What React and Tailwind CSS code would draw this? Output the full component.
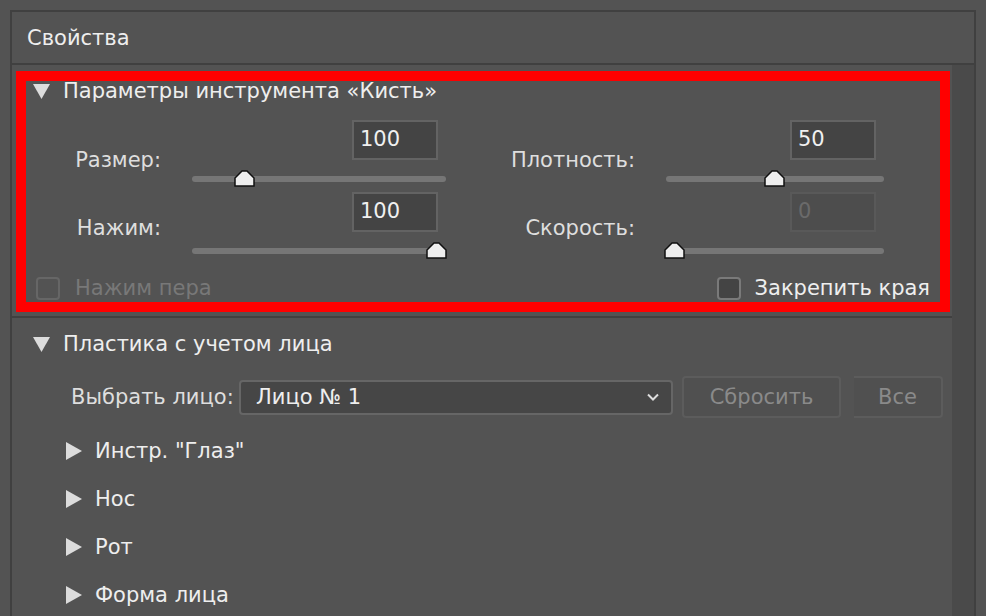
import React from 'react'

const FONT = "font-['DejaVu_Sans',sans-serif]"

function TriDown() {
  return (
    <svg width="17" height="15" viewBox="0 0 17 15" className="shrink-0">
      <polygon points="0,0 17,0 8.5,15" fill="#dcdcdc" />
    </svg>
  )
}

function TriRight() {
  return (
    <svg width="16" height="18" viewBox="0 0 16 18" className="shrink-0">
      <polygon points="0,0 16,9 0,18" fill="#dcdcdc" />
    </svg>
  )
}

function Thumb({ left }) {
  return (
    <svg
      width="21"
      height="17"
      viewBox="0 0 21 17"
      className="absolute top-[-6px]"
      style={{ left }}
    >
      <polygon
        points="1,16 1,8 8,1 13,1 20,8 20,16"
        fill="#eeeeee"
        stroke="#111111"
        strokeWidth="1.5"
        strokeLinejoin="miter"
      />
    </svg>
  )
}

function SliderControl({ value, thumb, disabled, labelOffset, label }) {
  return (
    <>
      <div
        className={`text-right text-[21px] leading-6 text-[#dedede] ${labelOffset}`}
      >
        {label}
      </div>
      <div className="flex flex-col">
        <div
          className={`ml-auto mr-[8px] flex h-[40px] w-[86px] items-center border-2 pl-[6px] text-[21px] ${
            disabled
              ? 'border-[#595959] bg-[#4d4d4d] text-[#6a6a6a]'
              : 'border-[#636363] bg-[#444444] text-[#f0f0f0]'
          }`}
        >
          {value}
        </div>
        <div className="relative mt-[16px] mb-[5px] h-[6px] rounded-full bg-[#767676]">
          <Thumb left={thumb} />
        </div>
      </div>
    </>
  )
}

function Checkbox({ disabled }) {
  return (
    <div
      className={`h-[23px] w-[24px] shrink-0 rounded-[4px] border-2 ${
        disabled ? 'border-[#666666]' : 'border-[#7a7a7a] bg-[#444444]'
      }`}
    />
  )
}

function Chevron() {
  return (
    <svg width="12" height="8" viewBox="0 0 12 8" fill="none">
      <path d="M1 1.5 L6 6.5 L11 1.5" stroke="#dedede" strokeWidth="2" />
    </svg>
  )
}

const SUBITEMS = ['Инстр. "Глаз"', 'Нос', 'Рот', 'Форма лица']

export default function App() {
  return (
    <div className={`h-[616px] w-[986px] overflow-hidden bg-[#535353] pl-[10px] pt-[10px] ${FONT}`}>
      <div className="h-[620px] w-[966px] border-x-2 border-t-2 border-[#404040]">
        <div className="flex h-[53px] items-center border-b-2 border-[#404040] pl-[15px] text-[21px] leading-6 text-[#eeeeee]">
          Свойства
        </div>

        <div className="flex">
          <div className="w-[940px]">
            {/* brush tool options */}
            <section className="relative border-b-2 border-[#404040] pt-[14px] pb-[16px]">
              <div className="flex items-center gap-[13px] pl-[21px] text-[21px] leading-6 text-[#eeeeee]">
                <TriDown />
                <span>Параметры инструмента «Кисть»</span>
              </div>

              <div className="mt-[17px] ml-[14px] grid grid-cols-[135px_254px_158px_218px] gap-x-[31px] gap-y-[5px]">
                <SliderControl label="Размер:" value="100" thumb={42} labelOffset="mt-[28px]" />
                <SliderControl label="Плотность:" value="50" thumb={98} labelOffset="mt-[28px]" />
                <SliderControl label="Нажим:" value="100" thumb={234} labelOffset="mt-[24px]" />
                <SliderControl label="Скорость:" value="0" thumb={-2} disabled labelOffset="mt-[24px]" />
              </div>

              <div className="mt-[17px] flex items-center justify-between pl-[24px] pr-[22px] text-[21px] leading-6">
                <div className="flex items-center gap-[15px] text-[#787878]">
                  <Checkbox disabled />
                  <span>Нажим пера</span>
                </div>
                <div className="flex items-center gap-[14px] text-[#eeeeee]">
                  <Checkbox />
                  <span>Закрепить края</span>
                </div>
              </div>

              <div className="pointer-events-none absolute left-[4px] top-[6px] h-[241px] w-[934px] border-[10px] border-[#ff0000]" />
            </section>

            {/* face-aware liquify */}
            <section className="pt-[14px]">
              <div className="flex items-center gap-[13px] pl-[21px] text-[21px] leading-6 text-[#eeeeee]">
                <TriDown />
                <span>Пластика с учетом лица</span>
              </div>

              <div className="mt-[20px] flex items-center pl-[59px] text-[21px] leading-6">
                <span className="w-[168px] shrink-0 whitespace-nowrap text-[#dedede]">Выбрать лицо:</span>
                <div className="flex h-[35px] w-[434px] items-center justify-between rounded-[4px] border-2 border-[#666666] bg-[#464646] pl-[15px] pr-[12px] text-[#eeeeee]">
                  <span>Лицо № 1</span>
                  <Chevron />
                </div>
                <div className="ml-[9px] flex h-[42px] w-[159px] items-center justify-center rounded-[4px] border-2 border-[#5c5c5c] bg-[#505050] text-[#8a8a8a]">
                  Сбросить
                </div>
                <div className="ml-[13px] flex h-[42px] w-[89px] items-center justify-center rounded-r-[4px] border-2 border-l-0 border-[#5c5c5c] bg-[#505050] text-[#8a8a8a]">
                  Все
                </div>
              </div>

              <div className="mt-[21px] flex flex-col gap-[24px] pl-[54px]">
                {SUBITEMS.map((item) => (
                  <div key={item} className="flex items-center gap-[13px] text-[21px] leading-6 text-[#eeeeee]">
                    <TriRight />
                    <span>{item}</span>
                  </div>
                ))}
              </div>
            </section>
          </div>
          <div className="h-[560px] w-[22px] bg-[#4a4a4a]" />
        </div>
      </div>
    </div>
  )
}
